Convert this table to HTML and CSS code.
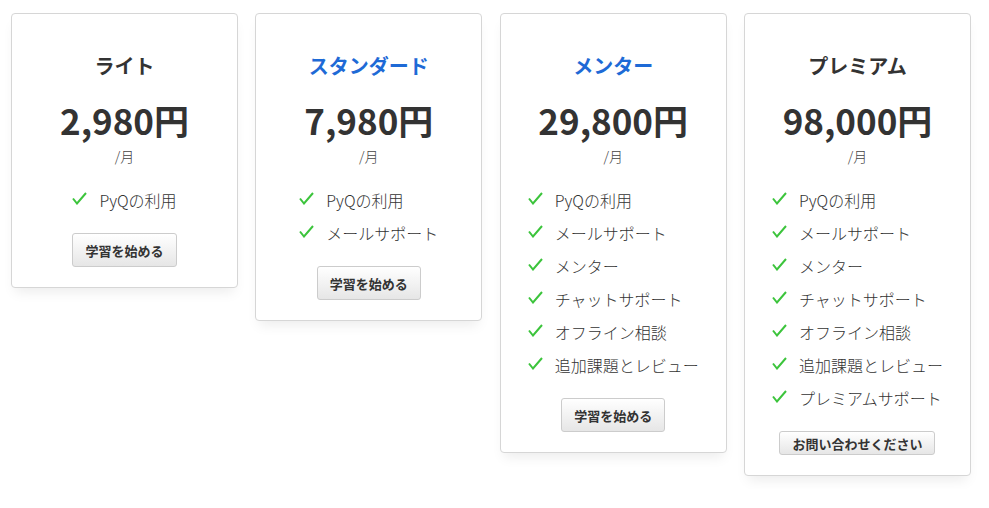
FILE: index.html
```html
<!DOCTYPE html>
<html lang="ja">
<head>
<meta charset="utf-8">
<link rel="stylesheet" href="styles.css">
</head>
<body>
<div class="plans">
  <div class="card">
    <h2 class="title">ライト</h2>
    <div class="price">2,980円</div>
    <div class="per">/月</div>
    <ul class="features">
      <li><svg class="check" viewBox="0 0 15 13"><polyline points="1,6.5 5,11.5 14,1"/></svg>PyQの利用</li>
    </ul>
    <button class="btn">学習を始める</button>
  </div>
  <div class="card">
    <h2 class="title blue">スタンダード</h2>
    <div class="price">7,980円</div>
    <div class="per">/月</div>
    <ul class="features">
      <li><svg class="check" viewBox="0 0 15 13"><polyline points="1,6.5 5,11.5 14,1"/></svg>PyQの利用</li>
      <li><svg class="check" viewBox="0 0 15 13"><polyline points="1,6.5 5,11.5 14,1"/></svg>メールサポート</li>
    </ul>
    <button class="btn">学習を始める</button>
  </div>
  <div class="card">
    <h2 class="title blue">メンター</h2>
    <div class="price">29,800円</div>
    <div class="per">/月</div>
    <ul class="features">
      <li><svg class="check" viewBox="0 0 15 13"><polyline points="1,6.5 5,11.5 14,1"/></svg>PyQの利用</li>
      <li><svg class="check" viewBox="0 0 15 13"><polyline points="1,6.5 5,11.5 14,1"/></svg>メールサポート</li>
      <li><svg class="check" viewBox="0 0 15 13"><polyline points="1,6.5 5,11.5 14,1"/></svg>メンター</li>
      <li><svg class="check" viewBox="0 0 15 13"><polyline points="1,6.5 5,11.5 14,1"/></svg>チャットサポート</li>
      <li><svg class="check" viewBox="0 0 15 13"><polyline points="1,6.5 5,11.5 14,1"/></svg>オフライン相談</li>
      <li><svg class="check" viewBox="0 0 15 13"><polyline points="1,6.5 5,11.5 14,1"/></svg>追加課題とレビュー</li>
    </ul>
    <button class="btn">学習を始める</button>
  </div>
  <div class="card">
    <h2 class="title">プレミアム</h2>
    <div class="price">98,000円</div>
    <div class="per">/月</div>
    <ul class="features">
      <li><svg class="check" viewBox="0 0 15 13"><polyline points="1,6.5 5,11.5 14,1"/></svg>PyQの利用</li>
      <li><svg class="check" viewBox="0 0 15 13"><polyline points="1,6.5 5,11.5 14,1"/></svg>メールサポート</li>
      <li><svg class="check" viewBox="0 0 15 13"><polyline points="1,6.5 5,11.5 14,1"/></svg>メンター</li>
      <li><svg class="check" viewBox="0 0 15 13"><polyline points="1,6.5 5,11.5 14,1"/></svg>チャットサポート</li>
      <li><svg class="check" viewBox="0 0 15 13"><polyline points="1,6.5 5,11.5 14,1"/></svg>オフライン相談</li>
      <li><svg class="check" viewBox="0 0 15 13"><polyline points="1,6.5 5,11.5 14,1"/></svg>追加課題とレビュー</li>
      <li><svg class="check" viewBox="0 0 15 13"><polyline points="1,6.5 5,11.5 14,1"/></svg>プレミアムサポート</li>
    </ul>
    <button class="btn btn-sm">お問い合わせください</button>
  </div>
</div>
</body>
</html>
```
FILE: styles.css
```css
* { box-sizing: border-box; }
body {
  margin: 0;
  background: #fff;
  font-family: "Noto Sans CJK JP", "Noto Sans", sans-serif;
  color: #333;
}
.plans {
  display: flex;
  align-items: flex-start;
  gap: 17.33px;
  padding: 13px 11px;
}
.card {
  width: 227px;
  flex: none;
  border: 1px solid #d6d6d6;
  border-radius: 4px;
  background: #fff;
  box-shadow: 0 8px 12px -4px rgba(0,0,0,0.08);
  padding: 37px 0 20px;
  text-align: center;
}
.title {
  margin: 0;
  font-size: 20px;
  line-height: 30px;
  font-weight: 700;
  color: #333;
}
.title.blue { color: #1e6ad6; }
.price {
  margin-top: 16px;
  font-size: 35px;
  line-height: 46px;
  font-weight: 700;
  color: #333;
}
.per {
  margin-top: 3px;
  font-size: 14px;
  line-height: 20px;
  font-weight: 300;
  color: #444;
}
.features {
  display: inline-block;
  list-style: none;
  margin: 17px 0 0;
  padding: 0;
  text-align: left;
}
.features li {
  display: flex;
  align-items: center;
  height: 33px;
  font-size: 16px;
  font-weight: 300;
  color: #333;
  white-space: nowrap;
}
.check {
  width: 15px;
  height: 13px;
  margin-right: 12px;
  margin-top: -3px;
  fill: none;
  stroke: #3cc43c;
  stroke-width: 2;
}
.btn {
  display: block;
  margin: 17px auto 0;
  height: 34px;
  padding: 0 12px;
  font-family: inherit;
  font-size: 13px;
  font-weight: 700;
  color: #333;
  border: 1px solid #ccc;
  border-radius: 3px;
  background: linear-gradient(#fff, #e6e6e6);
}
.btn-sm {
  height: 24px;
  padding: 0 12px;
}
```
